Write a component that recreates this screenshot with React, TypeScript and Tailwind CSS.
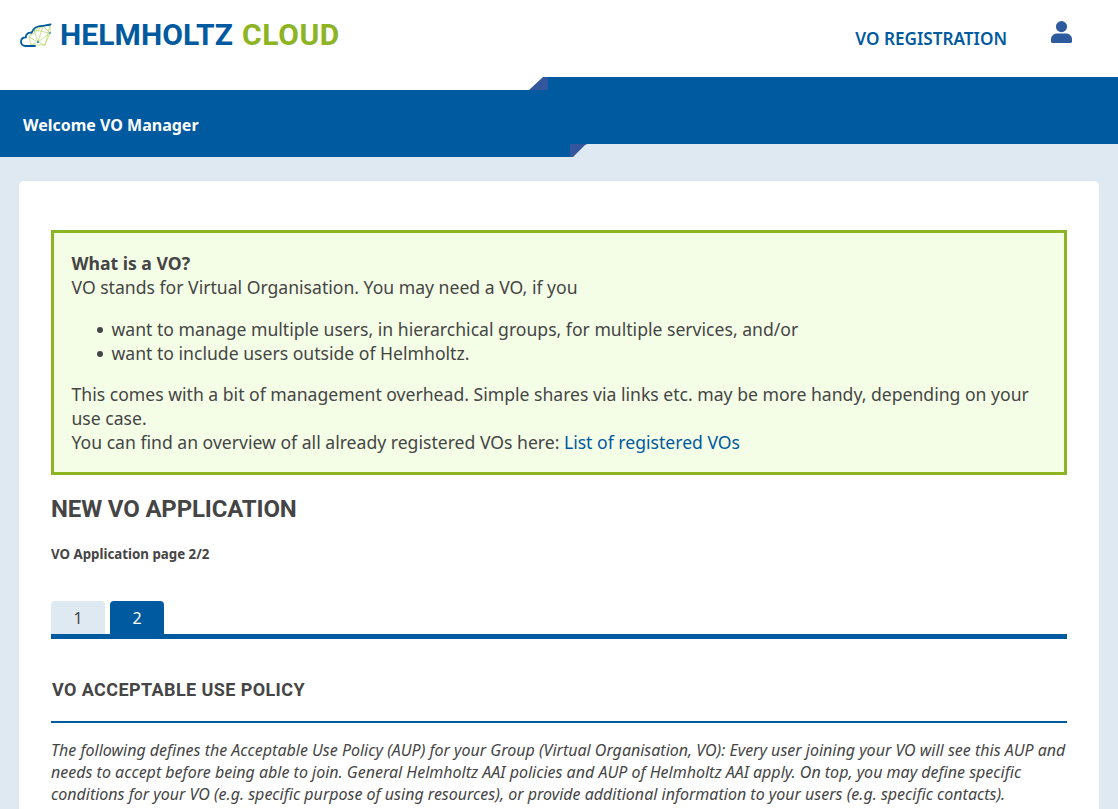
const sans = "font-['Noto_Sans','Open_Sans',sans-serif]";

function CloudLogo() {
  return (
    <svg width="32" height="25" viewBox="0 0 32 25" fill="none" className="shrink-0">
      <path d="M30 2 L23 3 L14 7 L9 14 L11 22 L18 19 L25 22 L30 10 Z M23 3 L18 19 M14 7 L18 19 M9 14 L18 19 M14 7 L30 10 M18 19 L30 10 M23 3 L30 10 M9 14 L23 3 M30 2 L25 22 M11 22 L25 22" stroke="#bdd56e" strokeWidth="0.75" />
      <path d="M15 23 H5.5 C2.5 23 1 21 1 18.8 C1 16 3 14.3 5.8 14.3 C6 11 8.5 9.2 11.5 9.8 C13 5.5 17.5 2.5 23 2.8 L30.5 1.5" stroke="#005aa0" strokeWidth="1.8" strokeLinecap="round" />
      <circle cx="18" cy="19" r="1.2" fill="#4f9cc0" />
      <circle cx="30" cy="10" r="1.1" fill="#4f9cc0" />
      <circle cx="14" cy="7" r="0.8" fill="#4f9cc0" />
    </svg>
  );
}

function UserIcon() {
  return (
    <svg width="21" height="22" viewBox="0 0 21 22" fill="#2e5b9e">
      <circle cx="10.5" cy="5.6" r="5.6" />
      <path d="M6 12.4 H15 C18.4 12.4 21 15 21 18.2 V20.2 C21 21.2 20.3 22 19.3 22 H1.7 C0.7 22 0 21.2 0 20.2 V18.2 C0 15 2.6 12.4 6 12.4 Z" />
    </svg>
  );
}

export default function App() {
  return (
    <div className={`h-[809px] overflow-hidden bg-[#dfe9f2] text-[#454545] ${sans}`}>
      <header className="h-[90px] bg-white">
        <div className="h-[77px] flex items-start">
          <div className="flex items-center gap-[8px] pl-5 pt-[19px]">
            <CloudLogo />
            <div className="flex gap-[9px] font-['Roboto',sans-serif] font-bold text-[30px] leading-[32px]">
              <span className="text-[#005aa0] tracking-[0.1px]">HELMHOLTZ</span>
              <span className="text-[#8cb423] tracking-[0.6px]">CLOUD</span>
            </div>
          </div>
          <a className="ml-auto mt-[28px] text-[17.15px] leading-[22px] font-semibold text-[#005aa0]">VO REGISTRATION</a>
          <div className="ml-[44px] mr-[46px] mt-[21px]">
            <UserIcon />
          </div>
        </div>
        <div className="h-[13px] ml-[548px] bg-[#005aa0]" />
      </header>

      <div className="relative h-[67px]">
        <div className="h-[54px] bg-[#005aa0] flex items-center pl-[23px] pt-[15px] text-[16px] font-bold text-white">
          Welcome VO Manager
        </div>
        <div className="h-[13px] mr-[548px] bg-[#005aa0]" />
        <svg className="absolute left-[528px] top-[-13px]" width="20" height="13" viewBox="0 0 20 13">
          <path d="M1 13 L15 0 H20 V13 Z" fill="#34569c" />
        </svg>
        <svg className="absolute left-[570px] top-[54px]" width="20" height="13" viewBox="0 0 20 13">
          <path d="M0 0 H18 C16 0 15 1 14 2 L3 13 H0 Z" fill="#34569c" />
        </svg>
      </div>

      <main className="mx-[19px] mt-6 bg-white rounded-[5px] px-8 pt-[49px] pb-8">
        <section className="border-[3px] border-[#8cb423] bg-[#f4fde6] pl-[17.5px] pr-[18px] pt-[17px] text-[17.6px] leading-[24px] h-[245px]">
          <div className="font-bold leading-[26px]">What is a VO?</div>
          <div className="leading-[22px]">VO stands for Virtual Organisation. You may need a VO, if you</div>
          <ul className="pl-10 mt-[19px]">
            <li className="relative">
              <span className="absolute left-[-15px] top-[10px] w-[6px] h-[6px] rounded-full bg-[#454545]" />
              want to manage multiple users, in hierarchical groups, for multiple services, and/or
            </li>
            <li className="relative">
              <span className="absolute left-[-15px] top-[10px] w-[6px] h-[6px] rounded-full bg-[#454545]" />
              want to include users outside of Helmholtz.
            </li>
          </ul>
          <p className="mt-[17px]">
            This comes with a bit of management overhead. Simple shares via links etc. may be more handy, depending on your use case.
          </p>
          <p>
            You can find an overview of all already registered VOs here: <a className="text-[#005aa0]">List of registered VOs</a>
          </p>
        </section>

        <h1 className="mt-[18px] font-['Roboto',sans-serif] font-bold text-[24px] leading-[32px] tracking-[-0.15px]">NEW VO APPLICATION</h1>
        <p className="mt-[19px] text-[13.3px] leading-[20px] font-bold">VO Application page 2/2</p>

        <div className="mt-[37px] flex gap-[5px] border-b-[5px] border-[#005aa0] text-[16px]">
          <div className="w-[54px] h-[33px] flex items-center justify-center rounded-t-[4px] bg-[#dfe9f2]">1</div>
          <div className="w-[54px] h-[33px] flex items-center justify-center rounded-t-[4px] bg-[#005aa0] text-white">2</div>
        </div>

        <h2 className="mt-[38px] font-['Roboto',sans-serif] font-bold text-[18px] leading-[26px] tracking-[0.4px] pl-px border-b-2 border-[#005aa0] pb-[18px]">VO ACCEPTABLE USE POLICY</h2>
        <p className="mt-[16px] italic text-[16px] leading-[22px]">
          The following defines the Acceptable Use Policy (AUP) for your Group (Virtual Organisation, VO): Every user joining your VO will see this AUP and needs to accept before being able to join. General Helmholtz AAI policies and AUP of Helmholtz AAI apply. On top, you may define specific conditions for your VO (e.g. specific purpose of using resources), or provide additional information to your users (e.g. specific contacts).
        </p>
      </main>
    </div>
  );
}
